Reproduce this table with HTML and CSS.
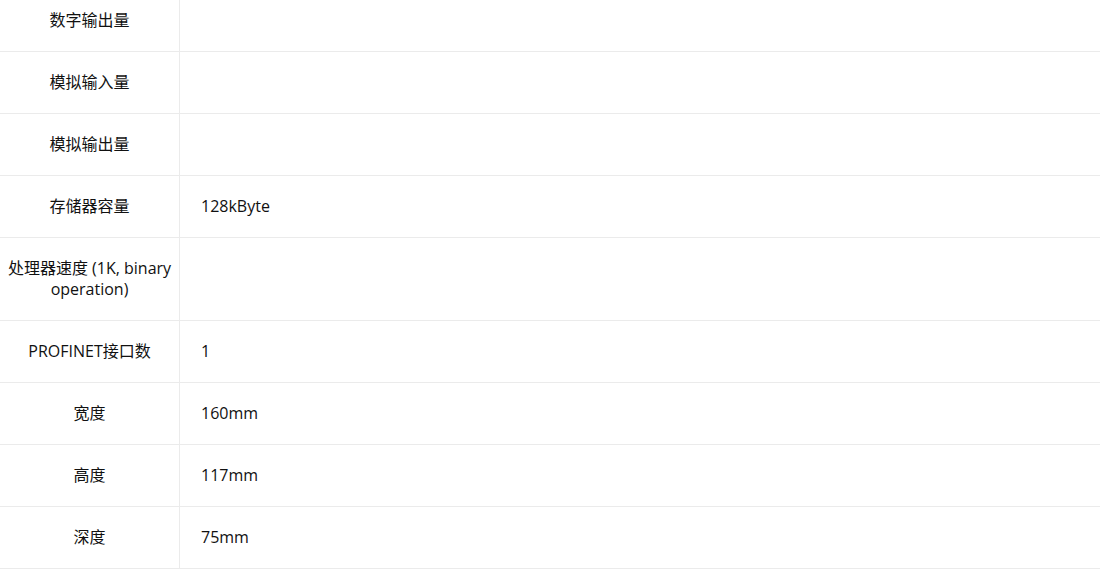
FILE: index.html
```html
<!DOCTYPE html>
<html lang="zh-CN">
<head>
<meta charset="utf-8">
<title>参数</title>
<link rel="stylesheet" href="styles.css">
</head>
<body>
<table class="spec">
  <tbody>
    <tr><td class="k">数字输出量</td><td class="v"></td></tr>
    <tr><td class="k">模拟输入量</td><td class="v"></td></tr>
    <tr><td class="k">模拟输出量</td><td class="v"></td></tr>
    <tr><td class="k">存储器容量</td><td class="v">128kByte</td></tr>
    <tr><td class="k">处理器速度 (1K, binary operation)</td><td class="v"></td></tr>
    <tr><td class="k">PROFINET接口数</td><td class="v">1</td></tr>
    <tr><td class="k">宽度</td><td class="v">160mm</td></tr>
    <tr><td class="k">高度</td><td class="v">117mm</td></tr>
    <tr><td class="k">深度</td><td class="v">75mm</td></tr>
  </tbody>
</table>
</body>
</html>
```
FILE: styles.css
```css
html, body {
  margin: 0;
  padding: 0;
  background: #fff;
}
body {
  font-family: "Open Sans", "Noto Sans CJK SC", sans-serif;
  font-size: 16px;
  color: #111;
  overflow: hidden;
}
.spec {
  width: 100%;
  border-collapse: collapse;
  margin-top: -10px;
}
.spec td {
  border-bottom: 1px solid #ebebeb;
  padding: 20px 5px;
  line-height: 21px;
  height: 21px;
  vertical-align: middle;
}
.spec .k {
  width: 169px;
  text-align: center;
  border-right: 1px solid #ebebeb;
}
.spec .v {
  text-align: left;
  padding-left: 21px;
}
```
